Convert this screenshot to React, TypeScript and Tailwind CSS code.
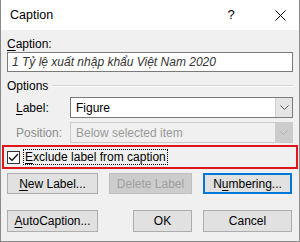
import React from "react";

const U = ({ children }: { children: React.ReactNode }) => <span className="underline underline-offset-2">{children}</span>;

export default function App() {
  const font = { fontFamily: '"Liberation Sans", Arial, sans-serif' };
  return (
    <div className="w-[300px] h-[242px] bg-[#f0f0f0] border border-t-0 border-[#8a8a8a] text-[12px] text-[#000] flex flex-col overflow-hidden" style={font}>
      <div className="h-[30px] bg-white flex items-center shrink-0">
        <span className="ml-[9px] text-[12.5px]">Caption</span>
        <span className="ml-auto w-[10px] text-center text-[13px]">?</span>
        <svg className="ml-[39px] mr-[13px]" width="11" height="11" viewBox="0 0 11 11">
          <path d="M0.5 0.5 L10.5 10.5 M10.5 0.5 L0.5 10.5" stroke="#000" strokeWidth="1" />
        </svg>
      </div>
      <div className="flex flex-col px-[6px]">
        <div className="mt-[6px] h-[16px] leading-[16px]"><U>C</U>aption:</div>
        <div className="h-[20px] bg-white border border-[#7a7a7a] flex items-center px-[4px] italic text-[#333] text-[12px]">
          1 Tỷ lệ xuất nhập khẩu Việt Nam 2020
        </div>
        <div className="mt-[6px] h-[16px] leading-[16px] flex items-center">
          <span>Options</span>
          <div className="flex-1 ml-[4px] h-[2px] border-t border-[#d5d5d5] border-b-white border-b" />
        </div>
        <div className="mt-[3px] flex items-center h-[21px]">
          <span className="ml-[9px] w-[54px]"><U>L</U>abel:</span>
          <div className="flex-1 h-[21px] bg-white border border-[#7a7a7a] flex items-center">
            <span className="ml-[5px]">Figure</span>
            <div className="ml-auto w-[17px] h-[19px] bg-[#e5e5e5] border-l border-[#d0d0d0] flex items-center justify-center">
              <svg width="9" height="5" viewBox="0 0 9 5"><path d="M0.5 0.5 L4.5 4.5 L8.5 0.5" stroke="#555" fill="none" /></svg>
            </div>
          </div>
        </div>
        <div className="mt-[4px] flex items-center h-[21px] text-[#8d8d8d]">
          <span className="ml-[9px] w-[54px]">Position:</span>
          <div className="flex-1 h-[21px] bg-[#f0f0f0] border border-[#cccccc] flex items-center">
            <span className="ml-[5px] text-[#9a9a9a]">Below selected item</span>
            <div className="ml-auto w-[17px] h-[19px] bg-[#cccccc] flex items-center justify-center">
              <svg width="9" height="5" viewBox="0 0 9 5"><path d="M0.5 0.5 L4.5 4.5 L8.5 0.5" stroke="#b0b0b0" fill="none" /></svg>
            </div>
          </div>
        </div>
        <div className="mt-[2px] -mx-[5px] h-[24px] border-2 border-[#e0161d] flex items-center">
          <div className="ml-[3px] w-[13px] h-[13px] bg-white border border-[#333] flex items-center justify-center">
            <svg width="11" height="9" viewBox="0 0 11 9"><path d="M1 4.5 L4 7.5 L10 1" stroke="#000" strokeWidth="1.2" fill="none" /></svg>
          </div>
          <span className="ml-[3px] px-[1px] border border-dotted border-black leading-[14px]"><U>E</U>xclude label from caption</span>
        </div>
        <div className="mt-[4px] flex h-[21px]">
          <div className="w-[91px] bg-[#e1e1e1] border border-[#adadad] flex items-center justify-center"><span><U>N</U>ew Label...</span></div>
          <div className="ml-[11px] w-[83px] bg-[#cccccc] border border-[#bfbfbf] flex items-center justify-center text-[#a0a0a0]">Delete Label</div>
          <div className="ml-[11px] w-[89px] bg-[#e1e1e1] border-2 border-[#0078d7] flex items-center justify-center"><span>N<U>u</U>mbering...</span></div>
        </div>
        <div className="mt-[16px] flex h-[22px]">
          <div className="w-[91px] bg-[#e1e1e1] border border-[#adadad] flex items-center justify-center"><span><U>A</U>utoCaption...</span></div>
          <div className="ml-[35px] w-[59px] bg-[#e1e1e1] border border-[#adadad] flex items-center justify-center">OK</div>
          <div className="ml-[11px] w-[89px] bg-[#e1e1e1] border border-[#adadad] flex items-center justify-center">Cancel</div>
        </div>
      </div>
    </div>
  );
}
